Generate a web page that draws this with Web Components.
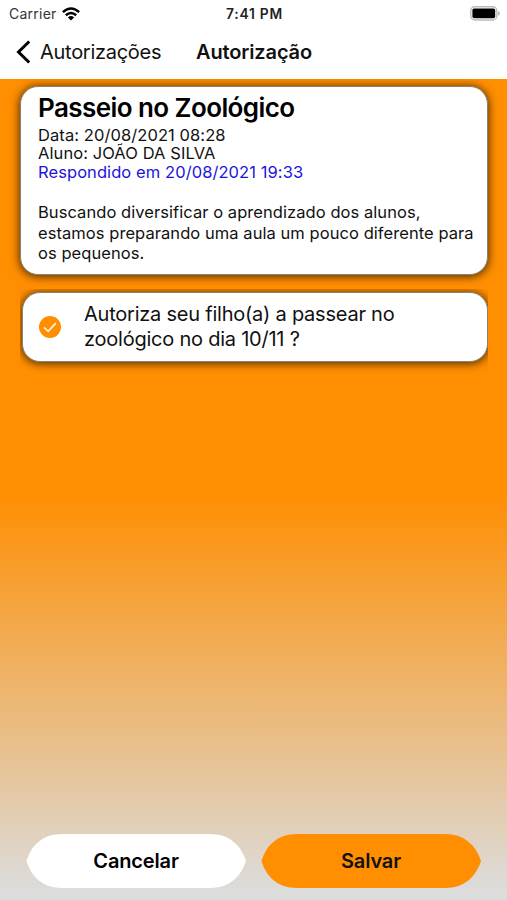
<!DOCTYPE html>
<html lang="pt-BR">
<head>
<meta charset="utf-8">
<meta name="viewport" content="width=device-width, initial-scale=1">
<title>Autorização</title>
<style>
    html, body { margin: 0; height: 100%; }
    body { font-family: Inter, "Liberation Sans", sans-serif; color: #111; overflow: hidden; }
</style>
</head>
<body>
<app-screen>
    <status-bar slot="top" carrier="Carrier" time="7:41 PM"></status-bar>
    <nav-header slot="top" back="Autorizações">Autorização</nav-header>
    <event-card>
        <span slot="title">Passeio no Zoológico</span>
        <span slot="date">Data: 20/08/2021 08:28</span>
        <span slot="student">Aluno: JOÃO DA SILVA</span>
        <span slot="answered">Respondido em 20/08/2021 19:33</span>
        Buscando diversificar o aprendizado dos alunos,<br>estamos preparando uma aula um pouco diferente para<br>os pequenos.
    </event-card>
    <question-card>Autoriza seu filho(a) a passear no<br>zoológico no dia 10/11 ?</question-card>
    <app-button slot="actions">Cancelar</app-button>
    <app-button slot="actions" primary>Salvar</app-button>
</app-screen>

<script>
class AppScreen extends HTMLElement {
    connectedCallback() {
        let shadowRoot = this.attachShadow({ mode: 'open' });
        shadowRoot.innerHTML = `
        <style>
            :host { display: flex; flex-direction: column; width: 507px; height: 900px; overflow: hidden; }
            header { height: 79px; background: #fff; }
            main {
                flex: 1;
                display: flex;
                flex-direction: column;
                overflow: hidden;
                background: linear-gradient(#ff8e00 50%, #dcdcdc 99%);
            }
            .content { flex: 1; padding: 7px 19px 0 20px; }
            footer { display: flex; gap: 15px; padding: 0 26px 12px 26px; }
        </style>
        <header><slot name="top"></slot></header>
        <main>
            <div class="content"><slot></slot></div>
            <footer><slot name="actions"></slot></footer>
        </main>
        `;
    }
}

class StatusBar extends HTMLElement {
    connectedCallback() {
        let shadowRoot = this.attachShadow({ mode: 'open' });
        shadowRoot.innerHTML = `
        <style>
            :host { display: grid; grid-template-columns: 1fr auto 1fr; align-items: center; height: 27px; padding: 0 7px 0 9px; }
            .carrier { display: flex; align-items: center; gap: 5px; font-size: 14px; letter-spacing: 0.25px; color: #333; }
            .time { font-size: 13.8px; font-weight: 600; letter-spacing: 0.75px; color: #222; }
            .battery { justify-self: end; }
            svg { display: block; }
        </style>
        <div class="carrier">
            <span>${this.getAttribute('carrier')}</span>
            <svg width="18" height="14" viewBox="0 0 18 14" fill="none" stroke="#000" stroke-width="2.5">
                <path d="M0.9 5.1 Q9 -2.2 17.1 5.1"/>
                <path d="M3.8 8.3 Q9 3.6 14.2 8.3"/>
                <path d="M9 13.5 L5.9 10.4 Q9 7.8 12.1 10.4 Z" fill="#000" stroke="none"/>
            </svg>
        </div>
        <div class="time">${this.getAttribute('time')}</div>
        <svg class="battery" width="30" height="15" viewBox="0 0 30 15">
            <rect x="0.8" y="0.8" width="26" height="13.2" rx="4" fill="#fff" stroke="#bbb" stroke-width="1.4"/>
            <rect x="2.4" y="2.5" width="22.8" height="9.8" rx="1.8" fill="#000"/>
            <path d="M28 5 Q30 6 30 7.4 Q30 8.8 28 9.8 Z" fill="#bbb"/>
        </svg>
        `;
    }
}

class NavHeader extends HTMLElement {
    connectedCallback() {
        let shadowRoot = this.attachShadow({ mode: 'open' });
        shadowRoot.innerHTML = `
        <style>
            :host { display: flex; align-items: center; height: 50px; padding-left: 16px; font-size: 20px; }
            svg { display: block; margin-right: 9px; }
            .back { width: 156px; letter-spacing: -0.28px; }
            .title { font-weight: 600; color: #111; letter-spacing: -0.14px; }
        </style>
        <svg width="15" height="24" viewBox="0 0 15 24" fill="none" stroke="#000" stroke-width="3">
            <path d="M13.2 1.5 L2.5 12 L13.2 22.5"/>
        </svg>
        <span class="back">${this.getAttribute('back')}</span>
        <span class="title"><slot></slot></span>
        `;
    }
}

class EventCard extends HTMLElement {
    connectedCallback() {
        let shadowRoot = this.attachShadow({ mode: 'open' });
        shadowRoot.innerHTML = `
        <style>
            :host {
                display: block;
                box-sizing: border-box;
                height: 189px;
                padding: 4px 0 0 17px;
                border: 1px solid #8d8272;
                border-radius: 18px;
                background: #fff;
                box-shadow: 0 1px 8px 1px rgba(0, 0, 0, 0.65);
                white-space: nowrap;
            }
            h1 { margin: 0; font-size: 26px; line-height: 34px; font-weight: 600; letter-spacing: -0.58px; color: #000; }
            .meta { font-size: 16.5px; line-height: 18.4px; letter-spacing: 0.08px; margin-top: 1px; }
            .answered { color: #1d14dc; }
            .text { font-size: 16.5px; line-height: 20.3px; letter-spacing: 0.06px; margin-top: 21px; }
        </style>
        <h1><slot name="title"></slot></h1>
        <div class="meta">
            <div><slot name="date"></slot></div>
            <div><slot name="student"></slot></div>
            <div class="answered"><slot name="answered"></slot></div>
        </div>
        <div class="text"><slot></slot></div>
        `;
    }
}

class QuestionCard extends HTMLElement {
    connectedCallback() {
        let shadowRoot = this.attachShadow({ mode: 'open' });
        shadowRoot.innerHTML = `
        <style>
            /* the list row cuts the shadow off at the sides and the top */
            :host { display: block; margin-top: 14px; padding: 3px 0 14px 2px; overflow: hidden; }
            .row {
                display: flex;
                align-items: center;
                box-sizing: border-box;
                height: 70px;
                padding-left: 16px;
                border: 1px solid #8d8272;
                border-radius: 18px;
                background: #fff;
                box-shadow: 0 1px 8px 1px rgba(0, 0, 0, 0.65);
            }
            svg { display: block; margin-right: 23px; }
            .text { font-size: 20px; line-height: 24.4px; letter-spacing: -0.23px; padding-bottom: 1px; white-space: nowrap; }
        </style>
        <div class="row">
            <svg width="22" height="22" viewBox="0 0 22 22">
                <circle cx="11" cy="11" r="11" fill="#ff8e00"/>
                <path d="M5 11.4 L9.2 15.3 L16.8 7.2" fill="none" stroke="#fff3dd" stroke-width="1.7"/>
            </svg>
            <div class="text"><slot></slot></div>
        </div>
        `;
    }
}

class AppButton extends HTMLElement {
    connectedCallback() {
        let shadowRoot = this.attachShadow({ mode: 'open' });
        shadowRoot.innerHTML = `
        <style>
            :host { display: block; }
            button {
                display: block;
                width: 220px;
                height: 54px;
                margin: 0;
                padding: 0;
                border: 0;
                background: #fff;
                font: 600 20px/54px Inter, "Liberation Sans", sans-serif;
                letter-spacing: -0.15px;
                color: #000;
                clip-path: path("M0.5 27 C5 12 16 0 36 0 H184 C204 0 215 12 220 27 C215 42 204 54 184 54 H36 C16 54 5 42 0.5 27 Z");
            }
            :host([primary]) button { background: #ff8e00; color: #111; }
        </style>
        <button><slot></slot></button>
        `;
    }
}

window.customElements.define('app-screen', AppScreen);
window.customElements.define('status-bar', StatusBar);
window.customElements.define('nav-header', NavHeader);
window.customElements.define('event-card', EventCard);
window.customElements.define('question-card', QuestionCard);
window.customElements.define('app-button', AppButton);
</script>
</body>
</html>
